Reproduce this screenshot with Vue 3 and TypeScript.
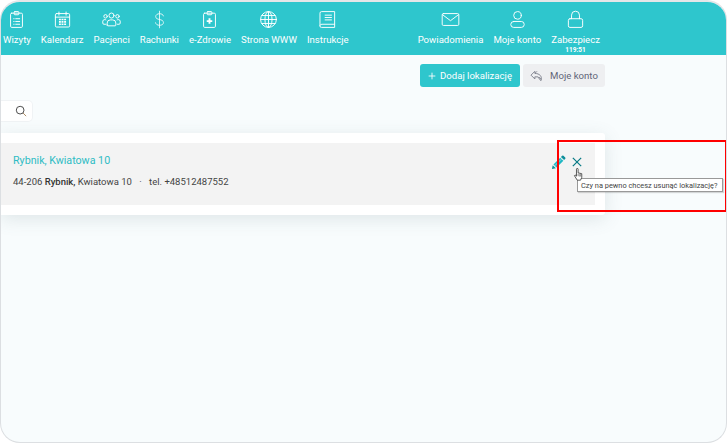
<script setup lang="ts">
const leftNav = [
  { label: 'Wizyty', icon: 'clipboard-list' },
  { label: 'Kalendarz', icon: 'calendar' },
  { label: 'Pacjenci', icon: 'users' },
  { label: 'Rachunki', icon: 'dollar' },
  { label: 'e-Zdrowie', icon: 'clipboard-plus' },
  { label: 'Strona WWW', icon: 'globe' },
  { label: 'Instrukcje', icon: 'book' }
];

const rightNav = [
  { label: 'Powiadomienia', icon: 'mail' },
  { label: 'Moje konto', icon: 'user' },
  { label: 'Zabezpiecz', icon: 'lock' }
];
</script>

<template>
  <div class="window">
    <header class="topbar">
      <nav class="nav nav--left">
        <a v-for="item in leftNav" :key="item.label" class="nav-item">
          <svg class="nav-icon" viewBox="0 0 24 24" fill="none" stroke="currentColor" stroke-width="1.2" stroke-linecap="round" stroke-linejoin="round">
            <template v-if="item.icon === 'clipboard-list'">
              <rect x="4.5" y="4" width="15" height="18" rx="1.5" />
              <rect x="9" y="2" width="6" height="4" rx="1" />
              <path d="M8.5 11h.5M11 11h5M8.5 14.5h.5M11 14.5h5M8.5 18h.5M11 18h5" />
            </template>
            <template v-else-if="item.icon === 'calendar'">
              <rect x="3" y="4.5" width="18" height="17" rx="1.5" />
              <path d="M3 9h18M7.5 2.5v4M16.5 2.5v4" />
              <path d="M7.5 12h2.4M10.800 12h2.4M14.100 12h2.4M7.5 15h2.4M10.800 15h2.4M14.100 15h2.4M7.5 18h2.4M10.800 18h2.4M14.100 18h2.4" stroke-width="2" stroke-linecap="butt" />
            </template>
            <template v-else-if="item.icon === 'users'">
              <circle cx="12" cy="7" r="3.2" />
              <circle cx="4.5" cy="8" r="2.2" />
              <circle cx="19.5" cy="8" r="2.2" />
              <path d="M6.5 19v-2.5a4 4 0 0 1 4-4h3a4 4 0 0 1 4 4V19a1 1 0 0 1-1 1h-9a1 1 0 0 1-1-1z" />
              <path d="M4.5 18H2.5A1.5 1.5 0 0 1 1 16.5V14a2.5 2.5 0 0 1 4-1.5M19.5 18h2a1.5 1.5 0 0 0 1.5-1.5V14a2.5 2.5 0 0 0-4-1.5" />
            </template>
            <template v-else-if="item.icon === 'dollar'">
              <path stroke-width="1" d="M12 1.5v21M17 7.5C16.5 5.5 14.5 4.700 12 4.700 9.5 4.700 7.200 6 7.200 8.400S9.5 11.5 12 12s5 1.400 5 3.900S14.5 19.300 12 19.300s-4.5-.9-5-3.200" />
            </template>
            <template v-else-if="item.icon === 'clipboard-plus'">
              <rect x="4.5" y="4" width="15" height="18" rx="1.5" />
              <rect x="9" y="2" width="6" height="4" rx="1" />
              <path d="M12 10.5v7M8.5 14h7" stroke-width="2.4" stroke-linecap="butt" />
            </template>
            <template v-else-if="item.icon === 'globe'">
              <circle cx="12" cy="12" r="10" />
              <ellipse cx="12" cy="12" rx="4.5" ry="10" />
              <path d="M12 2v20M2 12h20M3.5 7h17M3.5 17h17" />
            </template>
            <template v-else>
              <path d="M2.5 19.5V4A2 2 0 0 1 4.5 2H21v16H5a2.5 2.5 0 0 0-2.5 1.5A2 2 0 0 0 4.5 22H21v-4" />
              <path d="M9 6.5h8M9 9.5h8M9 12.5h8" />
            </template>
          </svg>
          <span>{{ item.label }}</span>
        </a>
      </nav>
      <nav class="nav nav--right">
        <a v-for="item in rightNav" :key="item.label" class="nav-item">
          <svg class="nav-icon" viewBox="0 0 24 24" fill="none" stroke="currentColor" stroke-width="1.2" stroke-linecap="round" stroke-linejoin="round">
            <template v-if="item.icon === 'mail'">
              <rect x="1.5" y="4.5" width="21" height="15" rx="1.5" />
              <path d="M2 6l10 7.5L22 6" />
            </template>
            <template v-else-if="item.icon === 'user'">
              <circle cx="12" cy="6.800" r="4.800" />
              <rect x="3.5" y="14.5" width="17" height="7.5" rx="3.7" />
            </template>
            <template v-else>
              <rect x="3" y="11" width="18" height="11" rx="2" />
              <path d="M7 11V6.5a5 5 0 0 1 10 0V11" />
            </template>
          </svg>
          <span>{{ item.label }}</span>
          <small v-if="item.icon === 'lock'" class="timer">119:51</small>
        </a>
      </nav>
    </header>

    <main class="content">
      <div class="actions">
        <button class="btn btn--primary" type="button">
          <svg class="btn-icon" viewBox="0 0 12 12" fill="none" stroke="currentColor" stroke-width="1.3"><path d="M6 1v10M1 6h10" /></svg>
          Dodaj lokalizację
        </button>
        <button class="btn btn--ghost" type="button">
          <svg class="btn-icon btn-icon--back" viewBox="0 0 16 14" fill="none" stroke="currentColor" stroke-width="1.1" stroke-linejoin="round"><path d="M5.5 1.5L1 6l4.5 4.5V8H9l3.5 4.5C14.5 7.5 11 4 5.5 4z" /><path d="M8 1.5l-2 2M10 8l3 3" /></svg>
          Moje konto
        </button>
      </div>

      <div class="search">
        <svg viewBox="0 0 14 14" fill="none" stroke="#444" stroke-width="1.1"><circle cx="6" cy="6" r="4.5" /><path d="M9.300 9.300l3.700 3.700" stroke="#a8875c" /></svg>
      </div>

      <section class="card">
        <div class="row">
          <div class="row-text">
            <a class="row-title">Rybnik, Kwiatowa 10</a>
            <p class="row-address">44-206 <b>Rybnik,</b> Kwiatowa 10 <span class="dot">·</span> tel. +48512487552</p>
          </div>
          <div class="row-actions">
            <svg class="icon-edit" viewBox="0 0 16 16"><path d="M1 15l.8-4.200 3.400 3.400z" fill="#0f8f9b" /><path d="M2.600 10l7.200-7.200 3.400 3.400L6 13.400z" fill="#1fb7c4" /><path d="M4 11.5l7-7" stroke="#fff" stroke-width=".5" /><path d="M10.600 2l1.300-1.200a1 1 0 0 1 1.400 0l1.900 1.900a1 1 0 0 1 0 1.400L14 5.400z" fill="#0f8f9b" /></svg>
            <svg class="icon-close" viewBox="0 0 12 12" fill="none" stroke="#0f7d88" stroke-width="1.5"><path d="M1 1l10 10M11 1L1 11" /></svg>
          </div>
        </div>
      </section>

      <div class="tooltip">Czy na pewno chcesz usunąć lokalizację?</div>
      <svg class="cursor" viewBox="0 0 12 16"><path d="M3.5 1.5a1 1 0 0 1 2 0V6l4.5 1v4.5L8.5 15h-4L1 9.5 1.800 8.5 3.5 10z" fill="#fff" stroke="#222" stroke-width=".9" stroke-linejoin="round" /><path d="M5.5 7v3M7 7.5v3M8.5 7.5v3" stroke="#222" stroke-width=".6" /></svg>
      <div class="highlight"></div>
    </main>
  </div>
</template>

<style scoped>
.window {
  position: relative;
  width: 727px;
  height: 443px;
  box-sizing: border-box;
  overflow: hidden;
  border: 1px solid #dcdfe2;
  border-top: 2px solid #e4e6e8;
  border-radius: 20px;
  background: #f8fcfd;
  font-family: Roboto, "Liberation Sans", sans-serif;
}

.topbar {
  display: flex;
  height: 53px;
  background: #2ec6cd;
  color: #fff;
}

.nav {
  display: flex;
  gap: 10px;
}

.nav--left {
  margin-left: 2px;
}

.nav--right {
  margin-left: 69px;
}

.nav-item {
  position: relative;
  display: flex;
  flex-direction: column;
  align-items: center;
  padding-top: 8px;
  font-size: 9.6px;
  line-height: 12px;
  white-space: nowrap;
}

.nav-icon {
  width: 19px;
  height: 19px;
  margin-bottom: 5px;
}

.timer {
  position: absolute;
  top: 44px;
  font-size: 6.5px;
  font-weight: 700;
  line-height: 9px;
}

.content {
  position: relative;
  height: 388px;
}

.actions {
  display: flex;
  gap: 3px;
  margin-left: 419px;
  padding-top: 9px;
}

.btn {
  display: flex;
  align-items: center;
  justify-content: center;
  gap: 4px;
  height: 23px;
  padding: 0;
  border: 0;
  border-radius: 3px;
  font: inherit;
  font-size: 9.6px;
}

.btn--primary {
  width: 100px;
  background: #2ec6cd;
  color: #fff;
}

.btn--ghost {
  width: 82px;
  background: #eeeff1;
  color: #5f6478;
}

.btn-icon {
  width: 8px;
  height: 8px;
}

.btn-icon--back {
  width: 14px;
  height: 12px;
  margin-right: 2px;
  color: #7f838e;
}

.search {
  display: flex;
  justify-content: flex-end;
  align-items: center;
  box-sizing: border-box;
  width: 32px;
  height: 22px;
  margin-top: 13px;
  padding-right: 5px;
  background: #fff;
  border: 1px solid #f0f3f5;
  border-left: 0;
  border-radius: 0 5px 5px 0;
}

.search svg {
  width: 12px;
  height: 12px;
}

.card {
  width: 604px;
  height: 82px;
  box-sizing: border-box;
  margin-top: 11px;
  padding: 10px 10px 10px 0;
  background: #fff;
  border-radius: 0 3px 3px 0;
  box-shadow: 0 4px 18px rgba(90, 110, 120, 0.16);
}

.row {
  display: flex;
  justify-content: space-between;
  height: 62px;
  background: #f3f3f3;
}

.row-text {
  padding: 11px 0 0 12px;
}

.row-title {
  display: block;
  color: #2ebcc4;
  font-size: 10.7px;
  line-height: 14px;
}

.row-address {
  margin: 8px 0 0;
  color: #444;
  font-size: 9.5px;
  line-height: 12px;
}

.row-address b {
  font-weight: 500;
  color: #333;
}

.dot {
  margin: 0 5px;
}

.row-actions {
  display: flex;
  gap: 6px;
  padding: 12px 13px 0 0;
}

.icon-edit {
  width: 15px;
  height: 15px;
}

.icon-close {
  width: 10px;
  height: 10px;
  margin-top: 2px;
}

.tooltip {
  position: absolute;
  left: 576px;
  top: 123px;
  box-sizing: border-box;
  width: 146px;
  height: 14px;
  padding: 2px 3px;
  background: #fff;
  border: 1px solid #999;
  box-shadow: 1px 1px 1px rgba(0, 0, 0, 0.15);
  color: #444;
  font-size: 7.4px;
  line-height: 9px;
  white-space: nowrap;
}

.cursor {
  position: absolute;
  left: 572px;
  top: 113px;
  width: 11px;
  height: 13px;
}

.highlight {
  position: absolute;
  left: 556px;
  top: 85px;
  width: 170px;
  height: 72px;
  box-sizing: border-box;
  border: 2px solid #f00;
}
</style>

<style>
html, body {
  margin: 0;
  background: #fff;
}
</style>
